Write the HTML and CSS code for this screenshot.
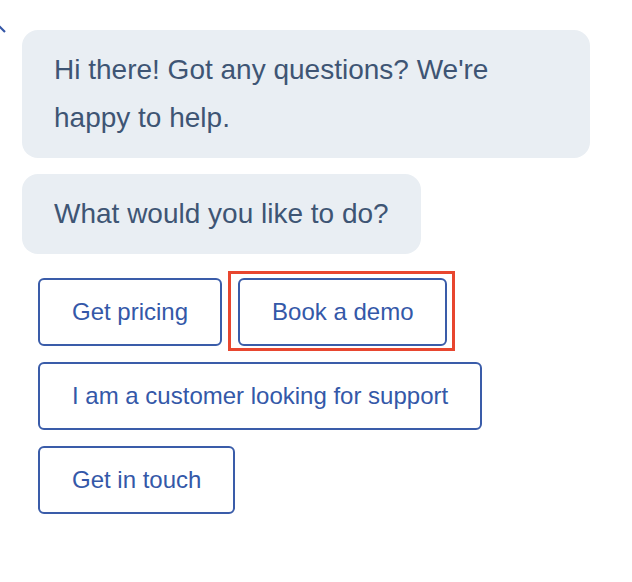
FILE: index.html
```html
<!DOCTYPE html>
<html lang="en">
<head>
<meta charset="utf-8">
<title>Chat</title>
<link rel="stylesheet" href="styles.css">
</head>
<body>
<div class="chat">
  <svg class="corner" width="10" height="10" viewBox="0 0 10 10" aria-hidden="true">
    <polyline points="-5,7 0,2 5,7" fill="none" stroke="#3557a7" stroke-width="2.2"/>
  </svg>
  <div class="bubble">Hi there! Got any questions? We're happy to help.</div>
  <div class="bubble">What would you like to do?</div>
  <div class="options">
    <button class="option">Get pricing</button>
    <button class="option highlight">Book a demo</button>
    <button class="option">I am a customer looking for support</button>
    <button class="option">Get in touch</button>
  </div>
</div>
</body>
</html>
```

FILE: styles.css
```css
html, body {
  margin: 0;
  padding: 0;
  background: #ffffff;
}

body {
  font-family: "Liberation Sans", Arial, Helvetica, sans-serif;
  width: 632px;
  height: 582px;
  overflow: hidden;
}

.chat {
  position: relative;
  display: flex;
  flex-direction: column;
  align-items: flex-start;
  gap: 16px;
  padding: 30px 0 0 22px;
}

.corner {
  position: absolute;
  left: 0;
  top: 25px;
}

.bubble {
  max-width: 568px;
  box-sizing: border-box;
  background: #e9eef3;
  color: #3e5574;
  font-size: 28px;
  line-height: 48px;
  padding: 16px 32px;
  border-radius: 16px;
}

.options {
  display: flex;
  flex-wrap: wrap;
  gap: 16px;
  width: 552px;
  margin: 8px 0 0 16px;
}

.option {
  position: relative;
  font-family: "Liberation Sans", Arial, Helvetica, sans-serif;
  font-size: 24px;
  line-height: 32px;
  color: #3458a8;
  background: #ffffff;
  border: 2px solid #3a5ca9;
  border-radius: 6px;
  padding: 16px 32px;
  margin: 0;
  cursor: pointer;
}

.highlight::after {
  content: "";
  position: absolute;
  left: -12px;
  top: -9px;
  right: -10px;
  bottom: -7px;
  border: 3px solid #e8462f;
  pointer-events: none;
}
```
